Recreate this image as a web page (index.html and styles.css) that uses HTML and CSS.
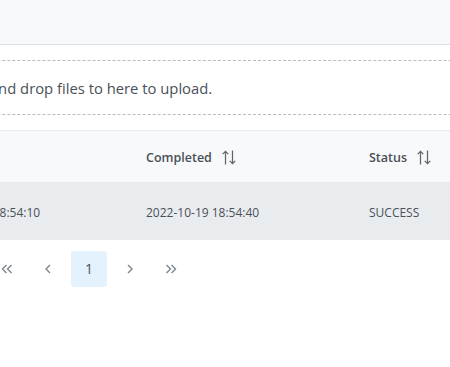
FILE: index.html
```html
<!DOCTYPE html>
<html lang="en">
<head>
  <meta charset="UTF-8" />
  <meta name="viewport" content="width=device-width, initial-scale=1" />
  <title>Uploads</title>
  <link rel="stylesheet" href="styles.css">
</head>
<body>

  <div class="page">
    <!-- File upload -->
    <div class="upload">
      <div class="upload-bar"></div>
      <div class="upload-content">
        <div class="drop-zone">Drag and drop files to here to upload.</div>
      </div>
    </div>

    <!-- Table -->
    <table class="jobs">
      <thead>
        <tr>
          <th class="col started">Started</th>
          <th class="col">
            <span class="th-inner">Completed
              <svg class="sort" viewBox="0 0 16 16" width="16" height="17"><path d="M4.5 15V1.8M1.7 4.6L4.5 1.8L7.3 4.6M11.5 1V14.2M8.7 11.4L11.5 14.2L14.3 11.4" fill="none" stroke="#5f666d" stroke-width="1.25"/></svg>
            </span>
          </th>
          <th>
            <span class="th-inner">Status
              <svg class="sort" viewBox="0 0 16 16" width="16" height="17"><path d="M4.5 15V1.8M1.7 4.6L4.5 1.8L7.3 4.6M11.5 1V14.2M8.7 11.4L11.5 14.2L14.3 11.4" fill="none" stroke="#5f666d" stroke-width="1.25"/></svg>
            </span>
          </th>
        </tr>
      </thead>
      <tbody>
        <tr class="selected">
          <td class="started">2022-10-19 18:54:10</td>
          <td>2022-10-19 18:54:40</td>
          <td>SUCCESS</td>
        </tr>
      </tbody>
    </table>

    <!-- Paginator -->
    <div class="paginator">
      <button class="page-btn"><svg viewBox="0 0 14 10" width="14" height="10"><path d="M6.5 1L2.5 5L6.5 9M11.5 1L7.5 5L11.5 9" fill="none" stroke="#7d858c" stroke-width="1.4"/></svg></button>
      <button class="page-btn"><svg viewBox="0 0 8 10" width="8" height="10"><path d="M6 1L2 5L6 9" fill="none" stroke="#7d858c" stroke-width="1.4"/></svg></button>
      <button class="page-btn active">1</button>
      <button class="page-btn"><svg viewBox="0 0 8 10" width="8" height="10"><path d="M2 1L6 5L2 9" fill="none" stroke="#7d858c" stroke-width="1.4"/></svg></button>
      <button class="page-btn"><svg viewBox="0 0 14 10" width="14" height="10"><path d="M2.5 1L6.5 5L2.5 9M7.5 1L11.5 5L7.5 9" fill="none" stroke="#7d858c" stroke-width="1.4"/></svg></button>
    </div>
  </div>

</body>
</html>
```

FILE: styles.css
```css
/* Reset */
* {
  box-sizing: border-box;
  margin: 0; padding: 0;
}

body {
  background: #ffffff;
  color: #495057;
  font-family: "Open Sans", "Noto Sans", sans-serif;
  overflow: hidden;
}

/* Contenedor desplazado (vista recortada) */
.page {
  margin-left: -93px;
  width: 700px;
}

/* Upload */
.upload-bar {
  height: 45px;
  background: #f8f9fa;
  border-bottom: 1px solid #dee2e6;
}

.upload-content {
  padding: 15px 0 15px 0;
}

.drop-zone {
  border-top: 1px dashed #b5bcc3;
  border-bottom: 1px dashed #b5bcc3;
  height: 55px;
  display: flex;
  align-items: center;
  padding-left: 46px;
  font-size: 14.8px;
  color: #495057;
}

/* Tabla */
.jobs {
  width: 100%;
  border-collapse: collapse;
  font-size: 12px;
}

.jobs th,
.jobs td {
  text-align: left;
  padding: 3px 16px 0;
}

.jobs .col {
  width: 223px;
}

.jobs .started {
  padding-left: 20px;
}

.jobs thead tr {
  background: #f8f9fa;
  border-top: 1px solid #e9ecef;
  height: 51px;
}

.jobs th {
  font-weight: 600;
  font-size: 12.5px;
  color: #495057;
}

.th-inner {
  display: inline-flex;
  align-items: center;
  gap: 9px;
}

.sort {
  display: block;
}

.jobs tbody tr {
  height: 58px;
}

.jobs tbody tr.selected {
  background: #e9ecef;
}

/* Paginador */
.paginator {
  display: flex;
  align-items: center;
  gap: 5px;
  padding: 11px 0 0 82px;
}

.page-btn {
  width: 36px;
  height: 36px;
  border: none;
  background: transparent;
  border-radius: 3px;
  display: flex;
  align-items: center;
  justify-content: center;
  font-family: inherit;
  font-size: 14px;
  color: #495057;
}

.page-btn.active {
  background: #e3f2fd;
}
```
